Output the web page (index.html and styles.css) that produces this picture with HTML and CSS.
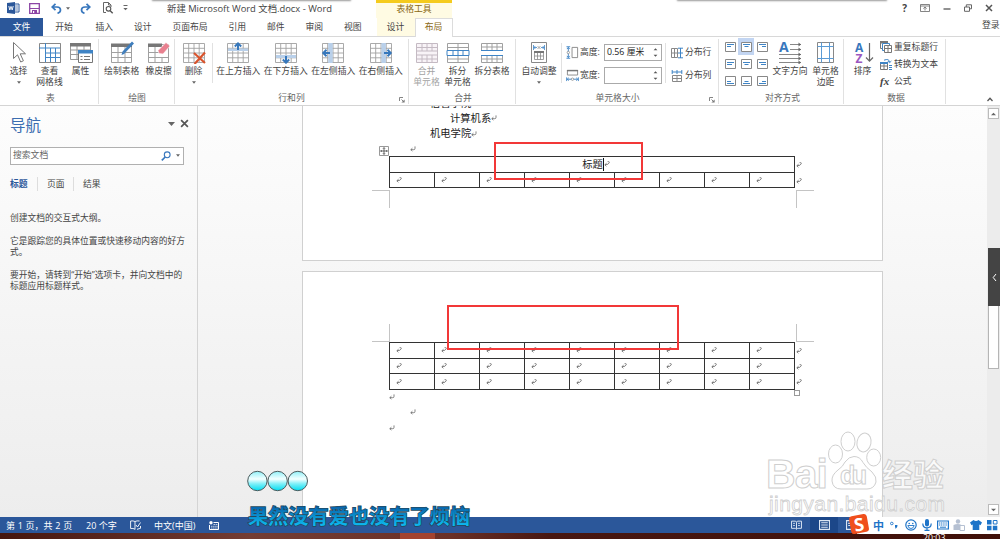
FILE: index.html
```
<!DOCTYPE html>
<html lang="zh-CN">
<head>
  <meta charset="UTF-8" />
  <title>新建 Microsoft Word 文档.docx - Word</title>
  <link rel="stylesheet" href="styles.css">
</head>
<body>

  <svg class="defs" width="0" height="0">
    <symbol id="ret" viewBox="0 0 6 6"><path d="M3.6 .6h1.1q.8 0 .5 1.2Q4.7 3.7 1 3.8M2.6 2.2L.8 3.8l1.6 1.5" fill="none" stroke="#666" stroke-width=".8"/></symbol>
    <symbol id="ret2" viewBox="0 0 6 6"><path d="M5 .4v2q0 1.3-1.3 1.3H.8M2.4 2.2L.8 3.7l1.6 1.4" fill="none" stroke="#666" stroke-width=".8"/></symbol>
    <symbol id="grid" viewBox="0 0 24 24"><path d="M1.5 3.5h21v19h-21zM1.5 8.3h21M1.5 13h21M1.5 17.8h21M6.7 3.5v19M12 3.5v19M17.2 3.5v19" fill="#fff" stroke="#a0a0a0" stroke-width=".9"/></symbol>
    <symbol id="down" viewBox="0 0 5 3"><path d="M0 0h5L2.5 3z" fill="#666"/></symbol>
    <symbol id="launch" viewBox="0 0 6 6"><path d="M.5 4V.5H4M2.5 2.5l2 2" fill="none" stroke="#777" stroke-width=".9"/><path d="M5.6 2.4v3.2H2.4z" fill="#777"/></symbol>
  </svg>

  <header class="titlebar">
    <div class="quick">
      <svg class="q-word" width="13" height="12" viewBox="0 0 13 12"><path d="M7 2h5v8H7" fill="#fff" stroke="#2b579a"/><path d="M8 4h3M8 6h3M8 8h3" stroke="#2b579a" stroke-width=".7"/><path d="M0 1l8-1v12l-8-1z" fill="#2b579a"/><path d="M1.8 4l1 4L4 4.4 5.200 8l1-4" fill="none" stroke="#fff" stroke-width=".9"/></svg>
      <svg class="q-save" width="11" height="11" viewBox="0 0 11 11"><path d="M.7.7h9.600v9.600H.7z" fill="#fff" stroke="#8b45a5" stroke-width="1.300"/><path d="M3 7h5v3.500H3z" fill="#8b45a5"/><path d="M1 5.500h9" stroke="#8b45a5"/><path d="M4 8h1.200v2H4z" fill="#fff"/></svg>
      <svg class="q-undo" width="11" height="11" viewBox="0 0 11 11"><path d="M4.500.8L1.200 4l3.300 3.200M1.500 4h4.500q3.500 0 3.500 3 0 2.500-3 3.300" fill="none" stroke="#3877bd" stroke-width="1.700"/></svg>
      <svg class="q-drop" width="4" height="3"><use href="#down"/></svg>
      <svg class="q-redo" width="11" height="11" viewBox="0 0 11 11"><path d="M6.500.8L9.800 4 6.500 7.200M9.500 4H5Q1.500 4 1.500 7q0 2.500 3 3.300" fill="none" stroke="#3877bd" stroke-width="1.700"/></svg>
      <svg class="q-view" width="12" height="12" viewBox="0 0 12 12"><path d="M4 10.500H1.500v-10h5l2.500 2.500v2M6.500.5V3H9" fill="none" stroke="#666"/><circle cx="6.500" cy="6.800" r="2.300" fill="none" stroke="#555" stroke-width="1.100"/><path d="M8.200 8.700l2.500 2.600" stroke="#555" stroke-width="1.400"/></svg>
      <svg class="q-more" width="5" height="6" viewBox="0 0 5 6"><path d="M.5.5h4" stroke="#666"/><path d="M.3 3h4.400L2.500 5.300z" fill="#666"/></svg>
    </div>
    <h1 class="doc-title">新建 Microsoft Word 文档.docx - Word</h1>
    <div class="context-title">表格工具</div>
    <div class="win-btns">
      <span class="help">?</span>
      <svg width="10" height="8" viewBox="0 0 10 8"><path d="M.5.500h9v7h-9zM.5 2h9M5 6.500V3.200M3.300 4.600L5 3l1.700 1.600" fill="none" stroke="#666" stroke-width=".8"/></svg>
      <svg width="8" height="8" viewBox="0 0 8 8"><path d="M.5 5h7" stroke="#555" stroke-width="1.300"/></svg>
      <svg width="8" height="8" viewBox="0 0 8 8"><path d="M.5 3h5v4.300h-5zM2.300 3V.8h5.200v4H5.500" fill="none" stroke="#666" stroke-width="1"/></svg>
      <svg width="8" height="8" viewBox="0 0 8 8"><path d="M1 1l6 6M7 1L1 7" stroke="#555" stroke-width="1.500"/></svg>
    </div>
    <i class="edge-shadow shadow-a"></i>
    <i class="edge-shadow shadow-b"></i>
  </header>

  <nav class="tabs">
    <span class="tab file">文件</span>
    <span class="tab w42">开始</span>
    <span class="tab">插入</span>
    <span class="tab">设计</span>
    <span class="tab wide">页面布局</span>
    <span class="tab">引用</span>
    <span class="tab">邮件</span>
    <span class="tab">审阅</span>
    <span class="tab">视图</span>
    <span class="tab ctx">设计</span>
    <span class="tab ctx active">布局</span>
    <span class="login">登录</span>
  </nav>

  <section class="ribbon">
    <div class="group g-table">
      <div class="tools">
        <div class="tool w31">
          <svg viewBox="0 0 24 24"><path d="M6.500 2.500v16l4-3.700 3.200 7.200 2.700-1.200-3.200-7h5.300z" fill="#fff" stroke="#777"/></svg>
          <span>选择</span><svg class="caret"><use href="#down"/></svg>
        </div>
        <div class="tool w31">
          <svg viewBox="0 0 24 24"><path d="M1.500 3.500h21v19h-21z" fill="#fff" stroke="#888"/><path d="M1 8h22M7.500 3v19M7.500 13h15M7.500 17.500h15M12.500 8v14M17.500 8v14" stroke="#3f84c5" fill="none"/><path d="M1.500 22.500h21v-19" fill="none" stroke="#888"/></svg>
          <span>查看<br>网格线</span>
        </div>
        <div class="tool w31">
          <svg viewBox="0 0 24 24"><path d="M1.500 3.500h20v16h-20zM1.500 10h20M1.500 14.500h20M8 6v13M15 6v13" fill="#fff" stroke="#999"/><path d="M1 3h21v3.500H1z" fill="#777"/><path d="M9.500 10.500h14v12h-14z" fill="#fff" stroke="#777"/><path d="M9 10h15v3.500H9z" fill="#3f84c5"/><path d="M11.500 16.500h2M15 16.500h6M11.500 19.500h2M15 19.500h6" stroke="#777"/></svg>
          <span>属性</span>
        </div>
      </div>
      <div class="caption">表</div>
    </div>

    <div class="group g-draw">
      <div class="tools">
        <div class="tool w42">
          <svg viewBox="0 0 24 24"><path d="M1.500 4.500h20v18h-20zM1.500 12.500h20M1.500 17.500h20M8 7v15M15 7v15" fill="#fff" stroke="#a0a0a0"/><path d="M1 3.500h21v3.500H1z" fill="#777"/><path d="M23 2.500L13.500 12.500" stroke="#3f7ebd" stroke-width="2.800"/><path d="M11.500 15l1-3.500 2.300 2.300z" fill="#3f7ebd"/></svg>
          <span>绘制表格</span>
        </div>
        <div class="tool w31">
          <svg viewBox="0 0 24 24"><path d="M1.500 4.500h20v18h-20zM1.500 12.500h12M1.500 17.500h20M8 7v15M15 17v5" fill="#fff" stroke="#a0a0a0"/><path d="M1 3.500h14v3.500H1z" fill="#777"/><path d="M11 10.500l8-8 4 3.500-7 8-4-.5z" fill="#e8808f" stroke="#fff" stroke-width=".6"/></svg>
          <span>橡皮擦</span>
        </div>
      </div>
      <div class="caption">绘图</div>
    </div>

    <div class="group g-rows">
      <div class="tools">
        <div class="tool w37">
          <svg viewBox="0 0 24 24"><use href="#grid"/><path d="M12 13l11 10M23 12.500L12.500 24" stroke="#d9532c" stroke-width="2.200"/></svg>
          <span>删除</span><svg class="caret"><use href="#down"/></svg>
        </div>
        <i class="sep"></i>
        <div class="tool w47">
          <svg viewBox="0 0 24 24"><use href="#grid"/><path d="M2 8.500h20v2.500H2z" fill="#b9d0ea"/><path d="M12 10V4M8.800 6.500L12 3.300l3.200 3.200" fill="none" stroke="#3677bb" stroke-width="2"/></svg>
          <span>在上方插入</span>
        </div>
        <div class="tool w47">
          <svg viewBox="0 0 24 24"><use href="#grid"/><path d="M2 15h20v3H2z" fill="#b9d0ea"/><path d="M12 16v6.500M8.800 19.500l3.200 3.200 3.200-3.200" fill="none" stroke="#3677bb" stroke-width="2"/></svg>
          <span>在下方插入</span>
        </div>
        <div class="tool w47">
          <svg viewBox="0 0 24 24"><use href="#grid"/><path d="M7.200 3h4.500v20H7.200z" fill="#b9d0ea"/><path d="M9 13H2.500M5.500 9.800L2.300 13l3.200 3.200" fill="none" stroke="#3677bb" stroke-width="2"/></svg>
          <span>在左侧插入</span>
        </div>
        <div class="tool w47">
          <svg viewBox="0 0 24 24"><use href="#grid"/><path d="M12.400 3h4.500v20h-4.500z" fill="#b9d0ea"/><path d="M15 13h6.500M18.500 9.800l3.200 3.200-3.200 3.200" fill="none" stroke="#3677bb" stroke-width="2"/></svg>
          <span>在右侧插入</span>
        </div>
      </div>
      <div class="caption">行和列<svg class="launch"><use href="#launch"/></svg></div>
    </div>

    <div class="group g-merge">
      <div class="tools">
        <div class="tool w31 off">
          <svg viewBox="0 0 24 24"><path d="M1.500 3.500h21v19h-21zM1.500 7.500h21M1.500 11h21M1.500 15h21M1.500 19h21M7 3v8M12 3v8M17 3v8M7 15v8M12 15v8M17 15v8" fill="#f8f3f7" stroke="#c4bac3"/></svg>
          <span>合并<br>单元格</span>
        </div>
        <div class="tool w31">
          <svg viewBox="0 0 24 24"><path d="M1.500 3.500h21v19h-21zM1.500 7.500h21M1.500 19h21M12 3v8M12 15v8" fill="#fff" stroke="#a0a0a0"/><path d="M1 10.500h22v5H1zM7 10.500v5M12 10.500v5M17 10.500v5" fill="#fff" stroke="#3f84c5"/></svg>
          <span>拆分<br>单元格</span>
        </div>
        <div class="tool w38">
          <svg viewBox="0 0 24 24"><path d="M1.500 3.500h21v7h-21zM1.500 7h21M7 3.500v7M12 3.500v7M17 3.500v7M1.500 15.500h21v7h-21zM1.500 19h21M7 15.500v7M12 15.500v7M17 15.500v7" fill="#fff" stroke="#a0a0a0"/><path d="M1 10.500h22M1 15.500h22" stroke="#3f84c5" stroke-width="1.200"/></svg>
          <span>拆分表格</span>
        </div>
      </div>
      <div class="caption">合并</div>
    </div>

    <div class="group g-size">
      <div class="tools">
        <div class="tool w42">
          <svg viewBox="0 0 24 24"><path d="M4.500 2.500h15v20h-15z" fill="#fff" stroke="#888"/><path d="M7.500 12.500h9v7h-9zM7.500 16h9M10.500 12.500v7M13.500 12.500v7" fill="none" stroke="#888" stroke-width=".8"/><path d="M7 11h10v2H7z" fill="#777"/><path d="M6.500 5v5M17.500 5v5M7 7.500h3M14 7.500h3M8.300 6L7 7.500 8.300 9M15.700 6L17 7.500 15.700 9" fill="none" stroke="#3f84c5" stroke-width=".8"/><path d="M10.500 6l3 3M13.500 6l-3 3" stroke="#888" stroke-width=".7"/></svg>
          <span>自动调整</span><svg class="caret"><use href="#down"/></svg>
        </div>
        <i class="sep"></i>
        <div class="size-rows">
          <label class="size-row">
            <svg viewBox="0 0 14 14"><path d="M6.500 1.500h6v11h-6z" fill="#fff" stroke="#888"/><path d="M2.500 1.500v11M1 3.300l1.500-1.800L4 3.300M1 10.700l1.500 1.800L4 10.700M.5 .8h4M.5 13.200h4" fill="none" stroke="#3f84c5"/><circle cx="2.500" cy="7" r="1.300" fill="#fff" stroke="#888" stroke-width=".8"/></svg>
            <span>高度:</span><b class="field">0.56 厘米<svg viewBox="0 0 5 9"><path d="M.6 2.300L2.500.2l1.900 2.100zM.6 6.700l1.900 2.100 1.900-2.100z" fill="#555"/></svg></b>
          </label>
          <label class="size-row">
            <svg viewBox="0 0 14 14"><path d="M1.500 1.500h11v5h-11z" fill="#fff" stroke="#888"/><path d="M1 1h12v1.500H1z" fill="#777"/><path d="M1.500 11h11M3 9.500L1.300 11 3 12.500M11 9.500l1.700 1.500-1.700 1.500M.7 9v4M13.300 9v4" fill="none" stroke="#3f84c5"/><circle cx="7" cy="11" r="1.300" fill="#fff" stroke="#888" stroke-width=".8"/></svg>
            <span>宽度:</span><b class="field"><svg viewBox="0 0 5 9"><path d="M.6 2.300L2.500.2l1.900 2.100zM.6 6.700l1.900 2.100 1.900-2.100z" fill="#555"/></svg></b>
          </label>
        </div>
        <i class="sep sep-tall"></i>
        <div class="spread">
          <div><svg viewBox="0 0 12 12"><path d="M.5 1.500h6v9h-6zM3.500 1.500v9M.5 6h6" fill="none" stroke="#888"/><path d="M7 1.200h5M7 6h5M7 10.800h5M9.500 1v10" stroke="#3f84c5"/></svg>分布行</div>
          <div><svg viewBox="0 0 12 12"><path d="M1.500 5.500h9v6h-9zM6 5.500v6M1.500 8.500h9" fill="none" stroke="#888"/><path d="M1.200 0v4M6 0v4M10.800 0v4M1 2h10" stroke="#3f84c5"/></svg>分布列</div>
        </div>
      </div>
      <div class="caption">单元格大小<svg class="launch"><use href="#launch"/></svg></div>
    </div>

    <div class="group g-align">
      <div class="tools">
        <div class="align-grid">
          <span><svg viewBox="0 0 11 10"><path d="M.5.500h10v9H.5z"/><path class="ln" d="M2 2.500h7M2 4.500h4"/></svg></span>
          <span class="on"><svg viewBox="0 0 11 10"><path d="M.5.500h10v9H.5z"/><path class="ln" d="M2 2.500h7M3.500 4.500h4"/></svg></span>
          <span><svg viewBox="0 0 11 10"><path d="M.5.500h10v9H.5z"/><path class="ln" d="M2 2.500h7M5 4.500h4"/></svg></span>
          <span><svg viewBox="0 0 11 10"><path d="M.5.500h10v9H.5z"/><path class="ln" d="M2 3.500h7M2 5.500h5"/></svg></span>
          <span><svg viewBox="0 0 11 10"><path d="M.5.500h10v9H.5z"/><path class="ln" d="M2 3.500h7M3.500 5.500h4"/></svg></span>
          <span><svg viewBox="0 0 11 10"><path d="M.5.500h10v9H.5z"/><path class="ln" d="M2 3.500h7M4 5.500h5"/></svg></span>
          <span><svg viewBox="0 0 11 10"><path d="M.5.500h10v9H.5z"/><path class="ln" d="M2 7.500h7M2 5.500h4"/></svg></span>
          <span><svg viewBox="0 0 11 10"><path d="M.5.500h10v9H.5z"/><path class="ln" d="M2 7.500h7M3.500 5.500h4"/></svg></span>
          <span><svg viewBox="0 0 11 10"><path d="M.5.500h10v9H.5z"/><path class="ln" d="M2 7.500h7M5 5.500h4"/></svg></span>
        </div>
        <div class="tool w38">
          <svg viewBox="0 0 24 24"><path d="M12 4.500h11M12 9.500h11M1 14.500h22M1 18.500h22M1 22.500h22" stroke="#888"/><path d="M20.500 2.500l2.500 2-2.500 2M20.500 7.500l2.500 2-2.500 2M20.500 12.500l2.500 2-2.500 2M20.500 16.500l2.500 2-2.500 2M20.500 20.500l2.500 2-2.500 2" fill="#666"/><text x="1" y="12" class="big-a">A</text></svg>
          <span>文字方向</span>
        </div>
        <div class="tool w31">
          <svg viewBox="0 0 24 24"><path d="M3.500 2.500h16v20h-16z" fill="#fff" stroke="#888"/><path d="M7.500 2.500v20M15.500 2.500v20M3.500 6.500h16M3.500 18.500h16" stroke="#5b9bd5"/></svg>
          <span>单元格<br>边距</span>
        </div>
      </div>
      <div class="caption">对齐方式</div>
    </div>

    <div class="group g-data">
      <div class="tools">
        <div class="tool w31">
          <svg viewBox="0 0 24 24"><text x="4" y="11.500" class="sort-a">A</text><text x="4.500" y="22.500" class="sort-z">Z</text><path d="M18.500 3v18M15 17.500l3.500 3.700 3.500-3.700" fill="none" stroke="#666" stroke-width="1.200"/></svg>
          <span>排序</span>
        </div>
        <div class="data-list">
          <div><svg viewBox="0 0 12 12"><path d="M.5.500h7v7h-7z" fill="#fff" stroke="#777"/><path d="M0 0h8v2.500H0z" fill="#777"/><path d="M2.500 2.500h7v7h-7z" fill="#fff" stroke="#3f84c5"/><path d="M4.500 4.500h7v7h-7zM4.500 7.500h7M8 5v6" fill="#fff" stroke="#777"/></svg>重复标题行</div>
          <div><svg viewBox="0 0 12 12"><path d="M.5 4.500h7v7h-7zM.5 8h7M4 5v6" fill="#fff" stroke="#777"/><path d="M0 4h8v2H0z" fill="#3f84c5"/><path d="M4 2.200Q9 .2 9.500 4M7.800 3l1.700 1.800L11.400 3" fill="none" stroke="#3f84c5"/><path d="M9 7.500h3M9 9.500h3M9 11.500h3" stroke="#3f84c5"/></svg>转换为文本</div>
          <div><i class="fx">fx</i>公式</div>
        </div>
      </div>
      <div class="caption">数据</div>
    </div>
    <svg class="collapse" viewBox="0 0 6 5"><path d="M.5 4L3 1.300 5.500 4" fill="none" stroke="#555" stroke-width="1.300"/></svg>
  </section>

  <main class="workspace">
    <aside class="nav-pane">
      <div class="nav-head">
        <h2>导航</h2>
        <svg class="nav-drop" viewBox="0 0 7 4"><path d="M0 0h7L3.500 4z" fill="#666"/></svg>
        <svg class="nav-close" viewBox="0 0 8 8"><path d="M1 1l6 6M7 1L1 7" stroke="#555" stroke-width="1.500"/></svg>
      </div>
      <div class="search">
        <span>搜索文档</span>
        <svg class="lens" viewBox="0 0 10 10"><circle cx="6.200" cy="3.800" r="2.900" fill="none" stroke="#3877bd" stroke-width="1.100"/><path d="M4.200 6L.8 9.300" stroke="#3877bd" stroke-width="1.700"/></svg>
        <svg class="search-drop"><use href="#down"/></svg>
      </div>
      <div class="nav-tabs">
        <span class="current">标题</span>
        <span>页面</span>
        <span>结果</span>
      </div>
      <p>创建文档的交互式大纲。</p>
      <p>它是跟踪您的具体位置或快速移动内容的好方式。</p>
      <p>要开始，请转到“开始”选项卡，并向文档中的标题应用标题样式。</p>
    </aside>

    <div class="canvas">
      <article class="page page-one">
        <div class="line in2">信管学院<svg><use href="#ret2"/></svg></div>
        <div class="line in3">计算机系<svg><use href="#ret2"/></svg></div>
        <div class="line in2">机电学院<svg><use href="#ret2"/></svg></div>
        <div class="line in1"><svg><use href="#ret2"/></svg></div>
        <div class="sheet">
          <div class="row merged"><div class="cell">标题<i class="cursor"></i><svg><use href="#ret"/></svg></div><svg><use href="#ret"/></svg></div>
          <div class="row">
            <div class="cell"><svg><use href="#ret"/></svg></div><div class="cell"><svg><use href="#ret"/></svg></div><div class="cell"><svg><use href="#ret"/></svg></div>
            <div class="cell"><svg><use href="#ret"/></svg></div><div class="cell"><svg><use href="#ret"/></svg></div><div class="cell"><svg><use href="#ret"/></svg></div>
            <div class="cell"><svg><use href="#ret"/></svg></div><div class="cell"><svg><use href="#ret"/></svg></div><div class="cell"><svg><use href="#ret"/></svg></div>
            <svg><use href="#ret"/></svg>
          </div>
          <svg class="move" viewBox="0 0 10 10"><path d="M.5.500h9v9h-9z" fill="#fff" stroke="#999"/><path d="M5 1.500v7M1.500 5h7M4 2.700l1-1 1 1M4 7.300l1 1 1-1M2.700 4l-1 1 1 1M7.300 4l1 1-1 1" fill="none" stroke="#444" stroke-width=".8"/></svg>
        </div>
        <i class="crop bl"></i>
        <i class="crop br"></i>
        <i class="mark mark-one"></i>
      </article>

      <article class="page page-two">
        <div class="sheet">
          <div class="row">
            <div class="cell"><svg><use href="#ret"/></svg></div><div class="cell"><svg><use href="#ret"/></svg></div><div class="cell"><svg><use href="#ret"/></svg></div>
            <div class="cell"><svg><use href="#ret"/></svg></div><div class="cell"><svg><use href="#ret"/></svg></div><div class="cell"><svg><use href="#ret"/></svg></div>
            <div class="cell"><svg><use href="#ret"/></svg></div><div class="cell"><svg><use href="#ret"/></svg></div><div class="cell"><svg><use href="#ret"/></svg></div>
            <svg><use href="#ret"/></svg>
          </div>
          <div class="row">
            <div class="cell"><svg><use href="#ret"/></svg></div><div class="cell"><svg><use href="#ret"/></svg></div><div class="cell"><svg><use href="#ret"/></svg></div>
            <div class="cell"><svg><use href="#ret"/></svg></div><div class="cell"><svg><use href="#ret"/></svg></div><div class="cell"><svg><use href="#ret"/></svg></div>
            <div class="cell"><svg><use href="#ret"/></svg></div><div class="cell"><svg><use href="#ret"/></svg></div><div class="cell"><svg><use href="#ret"/></svg></div>
            <svg><use href="#ret"/></svg>
          </div>
          <div class="row">
            <div class="cell"><svg><use href="#ret"/></svg></div><div class="cell"><svg><use href="#ret"/></svg></div><div class="cell"><svg><use href="#ret"/></svg></div>
            <div class="cell"><svg><use href="#ret"/></svg></div><div class="cell"><svg><use href="#ret"/></svg></div><div class="cell"><svg><use href="#ret"/></svg></div>
            <div class="cell"><svg><use href="#ret"/></svg></div><div class="cell"><svg><use href="#ret"/></svg></div><div class="cell"><svg><use href="#ret"/></svg></div>
            <svg><use href="#ret"/></svg>
          </div>
          <i class="resize"></i>
        </div>
        <div class="line"><svg><use href="#ret2"/></svg></div>
        <div class="line in1"><svg><use href="#ret2"/></svg></div>
        <div class="line"><svg><use href="#ret2"/></svg></div>
        <i class="crop tl"></i>
        <i class="crop tr"></i>
        <i class="mark mark-two"></i>
      </article>
    </div>

    <div class="scrollbar">
      <span class="arrow"><svg viewBox="0 0 6 4"><path d="M0 3.500h6L3 .5z" fill="#666"/></svg></span>
      <i class="thumb"></i>
      <span class="arrow"><svg viewBox="0 0 6 4"><path d="M0 .5h6L3 3.500z" fill="#666"/></svg></span>
    </div>
    <div class="drawer"><svg viewBox="0 0 5 9"><path d="M4 1L1.200 4.500 4 8" fill="none" stroke="#fff"/></svg></div>
  </main>

  <footer class="status">
    <span class="s-page">第 1 页，共 2 页</span>
    <span class="s-words">20 个字</span>
    <svg class="s-proof" viewBox="0 0 11 10"><path d="M5 1.500Q3 .5.600 1v7.500q2.500-.5 4.500.8M5 1.500v7.800M5 1.500Q7 .5 9.500 1M6 5l1.500 2L10.500 2.500M7 9.300l3.500-1V6" fill="none" stroke="#fff" stroke-width=".9"/></svg>
    <span class="s-lang">中文(中国)</span>
    <svg class="s-macro" viewBox="0 0 10 9"><path d="M.5 4v4.500h9v-7h-5" fill="none" stroke="#fff"/><circle cx="2" cy="1.800" r="1.700" fill="#fff"/><path d="M4.500 3.500h4.500M2 5.300h7M2 7h7" stroke="#fff" stroke-width=".7" stroke-dasharray="1.500 .6"/></svg>
    <div class="views">
      <svg class="v-read" viewBox="0 0 10 9"><path d="M.5 1h3.700L5 2l.8-1h3.700v6.500H6L5 8.500l-1-1H.5zM5 2v6M2 3h1.500M2 5h1.500M6.500 3H8M6.500 5H8" fill="none" stroke="#dbe5f3" stroke-width=".9"/></svg>
      <span class="v-print"><svg viewBox="0 0 10 9"><path d="M.5.500h9v8h-9zM2 2.500h6M2 4.500h6M2 6.500h6" fill="none" stroke="#dbe5f3"/></svg></span>
      <svg class="v-web" viewBox="0 0 10 9"><path d="M.5.500h9v8h-9zM2 3h3M2 5h3" fill="none" stroke="#dbe5f3"/></svg>
    </div>
    <div class="ime">
      <span>中</span>
      <svg viewBox="0 0 12 12"><circle cx="3.800" cy="4.500" r="1.300" fill="none" stroke="#1e74c8" stroke-width=".9"/><path d="M7 6h2.500q.3 2.500-2 4v-1.500H7z" fill="#1e74c8"/></svg>
      <svg viewBox="0 0 12 12"><circle cx="6" cy="6" r="5.200" fill="#fff" stroke="#1e74c8" stroke-width="1.200"/><circle cx="4.200" cy="4.500" r=".8" fill="#1e74c8"/><circle cx="7.800" cy="4.500" r=".8" fill="#1e74c8"/><path d="M2.800 6.500h6.400Q8.500 9.500 6 9.500T2.800 6.500" fill="none" stroke="#1e74c8" stroke-width=".9"/></svg>
      <svg viewBox="0 0 12 12"><rect x="4" y="0" width="4" height="7.500" rx="2" fill="#1e74c8"/><path d="M1.800 4.500q0 4.300 4.200 4.300t4.200-4.300M6 9v2M3.500 11.400h5" fill="none" stroke="#1e74c8" stroke-width="1.200"/></svg>
      <svg viewBox="0 0 12 12"><path d="M.6 2h10.800v8H.6z" fill="#fff" stroke="#1e74c8" stroke-width="1.200"/><path d="M2 4h8M2 6h8" stroke="#1e74c8" stroke-width="1.200" stroke-dasharray="1.200 .6"/><path d="M3 8.200h6" stroke="#1e74c8"/></svg>
      <svg viewBox="0 0 12 12"><circle cx="5" cy="2.500" r="2.200" fill="#b5c0d2"/><path d="M.5 11V6q4.500-2 8 0v5z" fill="#b5c0d2"/><path d="M7 6.500h4.500v5H7z" fill="#fff" stroke="#b5c0d2"/></svg>
      <svg viewBox="0 0 12 12"><path d="M3.500 1Q6 3 8.500 1L12 3.500 10.500 6.300 9.300 5.500V11H2.700V5.500L1.500 6.300 0 3.500z" fill="#1e74c8"/></svg>
      <svg viewBox="0 0 12 12"><path d="M1 1h4.500v4.500H1zM1 6.700h4.500v4.500H1zM6.800 6.700h4.500v4.500H6.800z" fill="#1e74c8"/><path d="M7.300 1.500H11V5H7.300z" fill="#fff" stroke="#1e74c8"/></svg>
      <i class="sogou">S</i>
    </div>
  </footer>
  <div class="taskbar"><i></i><span>20:03</span></div>

  <svg class="lyrics" width="240" height="66" viewBox="0 0 240 66">
    <defs>
      <linearGradient id="ball" x1="0" y1="0" x2="0" y2="1"><stop offset="0" stop-color="#8ff0f8"/><stop offset=".4" stop-color="#f4ffff"/><stop offset=".65" stop-color="#7ceff8"/><stop offset="1" stop-color="#00dcf0"/></linearGradient>
      <linearGradient id="words" gradientUnits="userSpaceOnUse" x1="0" y1="40" x2="0" y2="59"><stop offset="0" stop-color="#0860a8"/><stop offset="1" stop-color="#0cb8ee"/></linearGradient>
    </defs>
    <g fill="url(#ball)" stroke="#4a5a5c" stroke-width="1"><circle cx="17.400" cy="15" r="9.700"/><circle cx="37.600" cy="15" r="9.700"/><circle cx="57.800" cy="15" r="9.700"/></g>
    <text x="8" y="57.500" textLength="222" class="lyric-text">果然没有爱也没有了烦恼</text>
  </svg>

  <svg class="watermark" width="190" height="90" viewBox="0 0 190 90">
    <g class="wm">
      <text x="6" y="58" textLength="62" class="wm-bai">Bai</text>
      <ellipse cx="75.500" cy="24" rx="7" ry="9"/><ellipse cx="88" cy="11.500" rx="7" ry="9.500"/><ellipse cx="104" cy="12.500" rx="7" ry="9.500" transform="rotate(12 104 12.500)"/><ellipse cx="113.700" cy="27.500" rx="7" ry="8.500"/>
      <path d="M94 26.500q6 0 9 6 3 5 9 9.500 5 5 4 10-2 7-9 7H81q-8 0-9-8-.5-6 6-11 5-3.500 7-8 4-5.500 9-5.500z"/>
      <text x="80" y="54" textLength="27" class="wm-du">du</text>
      <text x="122" y="55.500" textLength="62" class="wm-cn">经验</text>
      <text x="9" y="80.500" textLength="176" class="wm-url">jingyan.baidu.com</text>
    </g>
  </svg>

</body>
</html>
```
FILE: styles.css
```
* {
  box-sizing: border-box;
}
body {
  margin: 0;
  width: 1000px;
  height: 539px;
  overflow: hidden;
  position: relative;
  display: flex;
  flex-direction: column;
  font-family: "Open Sans", "Noto Sans CJK SC", sans-serif;
  font-size: 8.800px;
  line-height: 11px;
  color: #444;
  background: #fff;
}
svg {
  display: block;
  flex: none;
}
i {
  font-style: normal;
}
.defs {
  position: absolute;
}

/* title bar */
.titlebar {
  height: 18px;
  flex: none;
  display: flex;
  position: relative;
}
.quick {
  width: 167px;
  display: flex;
  align-items: center;
  padding: 0 0 2px 7px;
}
.q-save { margin-left: 9px; }
.q-undo { margin-left: 11px; }
.q-drop { margin-left: 4px; }
.q-redo { margin-left: 10px; }
.q-view { margin-left: 11px; }
.q-more { margin-left: 9px; }
.doc-title {
  margin: 0;
  width: 209px;
  font-size: 9.400px;
  font-weight: normal;
  line-height: 17px;
  white-space: nowrap;
}
.context-title {
  width: 76px;
  border-top: 3px solid #f5cb1d;
  background: #fffbe3;
  color: #8a6914;
  text-align: center;
  line-height: 13px;
}
.win-btns {
  margin-left: auto;
  padding: 0 7px 2px 0;
  display: flex;
  align-items: center;
  gap: 13px;
}
.help {
  font-weight: bold;
  font-size: 10px;
}
.edge-shadow {
  position: absolute;
  top: -3px;
  height: 3px;
  box-shadow: 0 1px 2px #999;
}
.shadow-a { left: 152px; width: 199px; }
.shadow-b { left: 677px; width: 210px; }

/* tabs */
.tabs {
  height: 19px;
  flex: none;
  display: flex;
  border-bottom: 1px solid #d8d8d8;
  line-height: 18px;
}
.tab {
  width: 38.500px;
  text-align: center;
}
.tab.w42 { width: 42px; }
.tab.wide { width: 56px; }
.tab.file {
  width: 43px;
  background: #2b579a;
  color: #fff;
}
.tab.ctx {
  background: #fffbe3;
  width: 38px;
  margin-left: 4.500px;
}
.tab.active {
  margin-left: 0;
  height: 19px;
  background: #fff;
  border: 1px solid #dcdcdc;
  border-width: 1px 1px 0;
  color: #8a6914;
  line-height: 16px;
}
.login {
  margin-left: auto;
  width: 18px;
  line-height: 14px;
  white-space: nowrap;
}

/* ribbon */
.ribbon {
  height: 69px;
  flex: none;
  display: flex;
  border-bottom: 1px solid #d4d4d4;
  padding-top: 2px;
}
.group {
  height: 65px;
  border-right: 1px solid #e1e1e1;
  display: flex;
  flex-direction: column;
}
.g-table { width: 99px; padding-left: 3px; }
.g-draw { width: 76px; padding-left: 1px; }
.g-rows { width: 234px; }
.g-merge { width: 107px; padding-left: 2px; }
.g-size { width: 203px; padding-left: 1px; }
.g-align { width: 125px; padding-left: 3px; }
.g-data { width: 102px; padding-left: 3px; }
.tools {
  height: 52px;
  display: flex;
}
.tool {
  display: flex;
  flex-direction: column;
  align-items: center;
  text-align: center;
  white-space: nowrap;
  padding-top: 1px;
}
.tool > svg {
  width: 24px;
  height: 24px;
}
.tool > span {
  margin-top: 2px;
}
.tool > .caret {
  width: 4px;
  height: 3px;
  margin-top: 4px;
}
.tool.w31 { width: 31px; }
.tool.w37 { width: 37px; }
.tool.w38 { width: 38px; }
.tool.w42 { width: 44px; }
.tool.w47 { width: 47.500px; }
.tool.off { color: #a3a3a3; }
.sep {
  width: 1px;
  height: 40px;
  margin-top: 4px;
  background: #e1e1e1;
}
.g-rows .sep {
  margin-right: 1.500px;
}
.caption {
  height: 13px;
  padding-top: 1px;
  line-height: 12px;
  text-align: center;
  color: #666;
  position: relative;
}
.launch {
  position: absolute;
  right: 3px;
  bottom: 1px;
  width: 6px;
  height: 6px;
}
.size-rows {
  padding: 5px 0 0 4px;
  display: flex;
  flex-direction: column;
  gap: 6px;
}
.size-row {
  display: flex;
  align-items: center;
  height: 17px;
}
.size-row > svg {
  width: 13px;
  height: 13px;
}
.size-row span {
  width: 25px;
  padding-left: 1px;
}
.field {
  width: 58px;
  height: 17px;
  border: 1px solid #aaa;
  font-weight: normal;
  color: #222;
  line-height: 15px;
  display: flex;
  padding: 0 3px 0 2px;
}
.field svg {
  width: 5px;
  height: 9px;
  margin: 3px 0 0 auto;
}
.sep-tall { margin-left: 3px; }
.spread {
  padding: 8px 0 0 5px;
  display: flex;
  flex-direction: column;
  gap: 11px;
}
.spread div {
  display: flex;
  gap: 2px;
  white-space: nowrap;
}
.spread svg {
  width: 12px;
  height: 12px;
}
.align-grid {
  width: 49px;
  height: 51px;
  margin-top: -1px;
  display: grid;
  grid-template-columns: repeat(3, 16px);
  grid-template-rows: repeat(3, 17px);
}
.align-grid span {
  display: flex;
  align-items: center;
  justify-content: center;
}
.align-grid .on {
  background: #c2d5f2;
}
.align-grid svg {
  width: 11px;
  height: 10px;
  fill: #fff;
  stroke: #888;
}
.align-grid .ln {
  stroke: #3f84c5;
}
.g-align .w31 { margin-left: 1px; }
.big-a {
  font: bold 14px "Open Sans", sans-serif;
  fill: #3877bd;
}
.sort-a, .sort-z {
  font: bold 12px "Open Sans", sans-serif;
  fill: #3877bd;
}
.sort-z { fill: #9b57c0; }
.data-list {
  padding: 2px 0 0 2px;
  display: flex;
  flex-direction: column;
  gap: 5px;
}
.data-list div {
  height: 12px;
  line-height: 12px;
  display: flex;
  gap: 2px;
  white-space: nowrap;
}
.data-list svg {
  width: 12px;
  height: 12px;
}
.fx {
  width: 12px;
  font: italic bold 11px "Liberation Serif", serif;
}
.collapse {
  width: 6px;
  height: 5px;
  margin: 58px 7px 0 auto;
}

/* workspace */
.workspace {
  flex: 1;
  min-height: 0;
  display: flex;
  position: relative;
  background: linear-gradient(#fdfdfd, #ededed);
}
.nav-pane {
  width: 198px;
  border-right: 1px solid #d4d4d4;
  padding: 9px 10px;
}
.nav-head {
  display: flex;
  height: 32px;
}
.nav-head h2 {
  margin: 0;
  font-size: 15.500px;
  font-weight: normal;
  line-height: 21px;
  color: #3b6db0;
  flex: 1;
}
.nav-drop {
  width: 7px;
  height: 4px;
  margin: 7px 5px 0 0;
}
.nav-close {
  width: 9px;
  height: 9px;
  margin: 4px -2px 0 0;
}
.search {
  width: 174px;
  height: 18px;
  border: 1px solid #b0b0b0;
  background: #fff;
  display: flex;
  align-items: center;
  padding: 0 3px 1px 2px;
  color: #666;
}
.search span { flex: 1; }
.lens {
  width: 10px;
  height: 10px;
  margin-right: 5px;
}
.search-drop {
  width: 4px;
  height: 3px;
}
.nav-tabs {
  display: flex;
  margin: 12px 0 22px;
  line-height: 14px;
}
.nav-tabs span {
  width: 36px;
  padding-left: 9px;
  border-left: 1px solid #ddd;
}
.nav-tabs .current {
  width: 27px;
  padding: 0;
  border: 0;
  color: #2b579a;
  font-weight: bold;
}
.nav-pane p {
  margin: 0 -3px 11px 0;
  line-height: 11.500px;
  font-size: 8.750px;
}

/* document */
.canvas {
  flex: 1;
  padding: 0 104px;
  display: flex;
  flex-direction: column;
  gap: 10px;
  overflow: hidden;
}
.page {
  width: 581px;
  background: #fff;
  border: 1px solid #d0d0d0;
  padding-left: 86px;
  position: relative;
  flex: none;
}
.page-one {
  height: 155px;
  border-top: 0;
}
.page-one .line:first-child {
  margin-top: -10px;
  height: 14.500px;
}
.page-one .sheet {
  margin-top: -1px;
}
.page-two {
  height: 260px;
  padding-top: 70px;
}
.page-two .sheet {
  margin-bottom: -1px;
}
.line {
  height: 15.500px;
  line-height: 15.500px;
  font-size: 10.300px;
  color: #222;
  display: flex;
  align-items: center;
}
.line svg, .row svg {
  width: 6px;
  height: 6px;
}
.in1 { padding-left: 21px; }
.in2 { padding-left: 41px; }
.in3 { padding-left: 61px; }
.sheet {
  position: relative;
  width: 406px;
  border-top: 1px solid #333;
}
.row {
  display: flex;
  align-items: center;
  width: 415px;
  height: 15.700px;
}
.cell {
  width: 45px;
  height: 100%;
  padding-left: 6px;
  border-right: 1px solid #333;
  border-bottom: 1px solid #333;
  display: flex;
  align-items: center;
}
.cell:first-child {
  width: 46px;
  border-left: 1px solid #333;
}
.row > svg { margin-left: 1px; }
.merged .cell:first-child {
  width: 406px;
  padding: 0 0 0 8px;
  justify-content: center;
  font-size: 10.300px;
  color: #222;
}
.cursor {
  width: 1px;
  height: 13px;
  background: #111;
}
.move {
  position: absolute;
  left: -10px;
  top: -11px;
  width: 10px;
  height: 10px;
}
.resize {
  position: absolute;
  left: 405px;
  bottom: -6px;
  width: 6px;
  height: 6px;
  border: 1px solid #999;
  background: #fff;
}
.crop {
  position: absolute;
  width: 18px;
  height: 18px;
  border: 0 solid #c4c4c4;
}
.bl { left: 69px; top: 84px; border-width: 1px 1px 0 0; }
.br { left: 493px; top: 84px; border-width: 1px 0 0 1px; }
.tl { left: 69px; top: 52px; border-width: 0 1px 1px 0; }
.tr { left: 493px; top: 52px; border-width: 0 0 1px 1px; }
.mark {
  position: absolute;
  border: 2px solid #f23838;
}
.mark-one { left: 191px; top: 36px; width: 149px; height: 38px; }
.mark-two { left: 144px; top: 33px; width: 232px; height: 45px; }

.scrollbar {
  width: 13px;
  background: #ececec;
  padding: 2px 1px;
  display: flex;
  flex-direction: column;
}
.arrow {
  height: 11px;
  border: 1px solid #bbb;
  background: #fff;
  display: flex;
  align-items: center;
  justify-content: center;
}
.arrow svg {
  width: 5px;
  height: 4px;
}
.thumb {
  height: 64px;
  margin: 186px 0 auto;
  border: 1px solid #b5b5b5;
  background: #fff;
}
.drawer {
  position: absolute;
  right: 0;
  top: 142px;
  width: 12px;
  height: 58px;
  background: #444;
  display: flex;
  align-items: center;
  justify-content: center;
}
.drawer svg {
  width: 5px;
  height: 9px;
}

/* status bar */
.status {
  height: 16px;
  flex: none;
  background: #2b579a;
  color: #fff;
  font-size: 9px;
  display: flex;
  align-items: center;
  padding-left: 6px;
  white-space: nowrap;
}
.s-page { width: 80px; word-spacing: .4px; }
.s-words { width: 44px; }
.s-proof { width: 11px; height: 10px; }
.s-lang { margin-left: 13px; width: 55px; }
.s-macro { width: 10px; height: 9px; }
.views {
  margin-left: auto;
  display: flex;
  align-items: center;
}
.views svg {
  width: 11px;
  height: 10px;
}
.v-print {
  width: 28px;
  height: 16px;
  margin: 0 8px;
  background: #1c4789;
  display: flex;
  align-items: center;
  justify-content: center;
}
.ime {
  position: relative;
  height: 17px;
  width: 143px;
  background: #fff;
  color: #1e74c8;
  font-size: 11px;
  font-weight: bold;
  display: flex;
  align-items: center;
  justify-content: space-between;
  padding: 0 2px 0 16px;
}
.ime svg {
  width: 12px;
  height: 12px;
}
.sogou {
  position: absolute;
  left: -7px;
  top: -2px;
  width: 18px;
  height: 18px;
  border-radius: 3px;
  background: #f04f1c;
  color: #fff;
  font-size: 18px;
  line-height: 18px;
  text-align: center;
  transform: rotate(-10deg);
}
.taskbar {
  height: 6px;
  flex: none;
  overflow: hidden;
  display: flex;
  background: linear-gradient(90deg, #45150d, #743d34 25%, #6b3026 45%, #481711 55%, #401009);
  color: #fff;
  line-height: 11px;
}
.taskbar i {
  width: 35px;
  margin-left: 400px;
  background: #a3432f;
}
.taskbar span {
  margin-left: 488px;
}

/* overlays */
.lyrics {
  position: absolute;
  left: 240px;
  top: 466px;
}
.lyric-text {
  font: bold 20px "Noto Sans CJK SC", sans-serif;
  fill: url(#words);
  stroke: #22485c;
  stroke-width: 1.500px;
  paint-order: stroke;
}
.watermark {
  position: absolute;
  left: 760px;
  top: 430px;
}
.wm {
  fill: #fff;
  fill-opacity: .7;
  stroke: #cfcfcf;
  stroke-width: 1px;
}
.wm-bai { font: bold 41px "Liberation Sans", sans-serif; }
.wm-du { font: bold 25px "Liberation Sans", sans-serif; }
.wm-cn { font: bold 31px "Noto Sans CJK SC", sans-serif; }
.wm-url {
  font: 21px "Liberation Sans", sans-serif;
  stroke-width: .8px;
}
```
